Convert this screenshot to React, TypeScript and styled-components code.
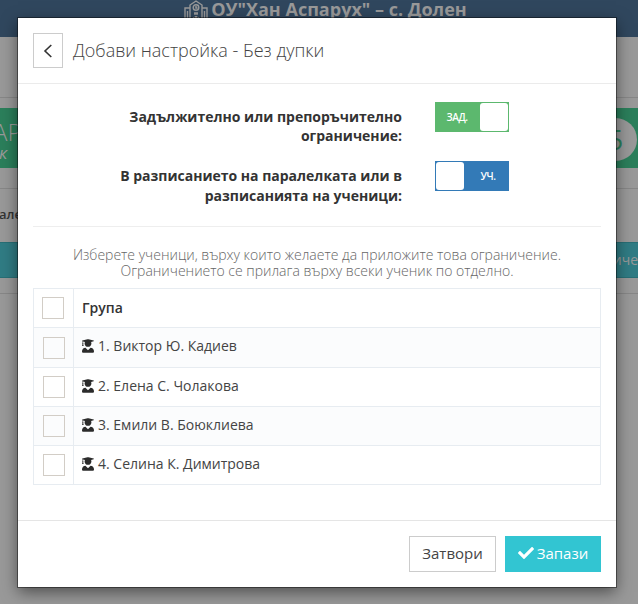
import React from "react";
import styled, { createGlobalStyle, css } from "styled-components";
import { FaCheck, FaUserGraduate } from "react-icons/fa";

const GlobalStyle = createGlobalStyle`
  * { box-sizing: border-box; }
  body {
    margin: 0;
    overflow: hidden;
    background: #999;
    color: #333;
    font: 14px/20px "Open Sans", sans-serif;
  }
  button { font-family: inherit; cursor: pointer; }
`;

const Page = styled.div`
  position: relative;
  height: 604px;
  overflow: hidden;
`;

const TopBar = styled.header`
  display: flex;
  justify-content: center;
  gap: 3px;
  height: 37px;
  padding-left: 13px;
  background: #30475e;
  color: #999;
  font-size: 18px;
  font-weight: 700;
  line-height: 19px;
  white-space: nowrap;
`;

const Backdrop = styled.main`
  display: flex;
  flex-direction: column;
`;

const Strip = styled.div<{ $height: number }>`
  height: ${(p) => p.$height}px;
  border-bottom: 1px solid #878787;
`;

const Banner = styled.div`
  display: flex;
  justify-content: space-between;
  height: 60px;
  margin-top: 10px;
  background: #2b7f5b;
  color: #999;
`;

const BannerText = styled.div`
  width: 40px;
  padding-top: 7px;
  font-size: 24px;
  font-weight: 300;
  line-height: 33px;
  text-indent: -7px;
  white-space: nowrap;

  em {
    display: block;
    margin-top: -5px;
    font-size: 17px;
    font-weight: 400;
    line-height: 20px;
    text-indent: -1px;
  }
`;

const Badge = styled.div`
  width: 43px;
  height: 43px;
  margin: 10px 1px 0 0;
  border-radius: 50%;
  background: #999;
  color: #2b7f5b;
  font-size: 27px;
  line-height: 43px;
  text-align: center;
`;

const Caption = styled.div`
  height: 53px;
  padding-top: 15px;
  font-size: 13px;
  font-weight: 600;
  text-indent: -1px;
`;

const TealBar = styled.div`
  height: 36px;
  border: solid #286f76;
  border-width: 1px 0;
  background: #307c84;
  color: #999;
  line-height: 34px;
  text-align: right;
`;

const Dialog = styled.section`
  position: absolute;
  top: 18px;
  left: 18px;
  display: flex;
  flex-direction: column;
  width: 598px;
  height: 569px;
  background: #fff;
  box-shadow: 0 0 0 1px rgba(0, 0, 0, 0.42), 0 5px 15px rgba(0, 0, 0, 0.5);
`;

const DialogHeader = styled.header`
  display: flex;
  gap: 10px;
  height: 66px;
  padding: 15px;
  border-bottom: 1px solid #ebebeb;
`;

const BackButton = styled.button`
  display: grid;
  place-items: center;
  width: 30px;
  height: 35px;
  padding: 0;
  border: 1px solid #ccc;
  background: #fff;
`;

const Title = styled.h4`
  margin: 0;
  color: #444;
  font-size: 18px;
  font-weight: 300;
  line-height: 35px;
`;

const DialogBody = styled.div`
  flex: 1;
  padding: 18px 15px 0;
`;

const Field = styled.div`
  display: flex;
  gap: 33px;
  height: 59px;
`;

const Label = styled.label<{ $leading: number }>`
  width: 369px;
  padding-top: 5px;
  font-weight: 700;
  line-height: ${(p) => p.$leading}px;
  text-align: right;
`;

const Switch = styled.button<{ $on: boolean }>`
  display: flex;
  flex-direction: ${(p) => (p.$on ? "row" : "row-reverse")};
  width: 74px;
  height: 30px;
  padding: 1px;
  border: 0;
  background: ${(p) => (p.$on ? "#5cb86e" : "#337ab7")};
  color: #fff;
  font-size: 10px;
  font-weight: 600;
  line-height: 28px;
`;

const SwitchText = styled.span<{ $on: boolean }>`
  flex: 1;
  padding: ${(p) => (p.$on ? "0 2px 0 0" : "0 0 0 4px")};
  text-align: center;
  letter-spacing: -0.4px;
`;

const Knob = styled.span`
  width: 28px;
  height: 28px;
  border-radius: 3px;
  background: #fff;
`;

const Divider = styled.hr`
  height: 1px;
  margin: 6px 0 20px;
  border: 0;
  background: #eee;
`;

const Hint = styled.p`
  margin: 0 0 9px;
  color: #666;
  font-weight: 300;
  line-height: 16px;
  text-align: center;
`;

const Table = styled.div`
  border: 1px solid #e7ecf1;
  border-bottom: 0;
`;

const Row = styled.div<{ $height?: number; $shaded?: boolean; $head?: boolean }>`
  display: flex;
  height: ${(p) => p.$height ?? 39}px;
  border-bottom: 1px solid #e7ecf1;
  background: ${(p) => (p.$shaded ? "#fbfcfd" : "#fff")};
  ${(p) => p.$head && css`font-weight: 600;`}
`;

const CheckCell = styled.div<{ $head?: boolean; $top: number }>`
  width: 40px;
  padding: ${(p) => p.$top}px 0 0 ${(p) => (p.$head ? 8 : 9)}px;
  border-right: 1px solid #e7ecf1;
`;

const Checkbox = styled.div`
  width: 22px;
  height: 22px;
  border: 1px solid #d2cdc6;
`;

const NameCell = styled.div<{ $head?: boolean }>`
  display: flex;
  gap: 4px;
  padding: ${(p) => (p.$head ? 9 : 8)}px 8px 0;
  color: ${(p) => (p.$head ? "#333" : "#444")};
`;

const StudentIcon = styled(FaUserGraduate)`
  width: 12px;
  height: 14px;
  margin-top: 3px;
  color: #2b2b2b;
`;

const DialogFooter = styled.footer`
  display: flex;
  justify-content: flex-end;
  gap: 9px;
  height: 67px;
  padding: 15px;
  border-top: 1px solid #e5e5e5;
`;

const Action = styled.button<{ $primary?: boolean }>`
  display: flex;
  align-items: center;
  justify-content: center;
  gap: 3px;
  width: ${(p) => (p.$primary ? 96 : 87)}px;
  height: 36px;
  padding: 0 0 2px;
  border: 1px solid ${(p) => (p.$primary ? "#32c5d2" : "#ccc")};
  background: ${(p) => (p.$primary ? "#32c5d2" : "#fff")};
  color: ${(p) => (p.$primary ? "#fff" : "#444")};
  font-size: 15px;
  font-weight: ${(p) => (p.$primary ? 500 : 400)};
`;

const students = ["Виктор Ю. Кадиев", "Елена С. Чолакова", "Емили В. Боюклиева", "Селина К. Димитрова"];

const SchoolIcon = () => (
  <svg width="24" height="22" viewBox="0 0 24 22" fill="none" stroke="currentColor" strokeWidth="1.4">
    <path d="M1 22V8h5M23 22V8h-5M6 22V5l6-4 6 4v17M3.5 11v11M20.5 11v11M9.5 22v-5M14.5 22v-5" />
    <circle cx="12" cy="7.5" r="2.8" />
    <path d="M12 6v2h1.5" />
    <path d="M10 13.5h4M12 16v6" strokeWidth="2.6" />
  </svg>
);

export default function App() {
  return (
    <Page>
      <GlobalStyle />
      <TopBar>
        <SchoolIcon />
        <span>ОУ"Хан Аспарух" – с. Долен</span>
      </TopBar>
      <Backdrop>
        <Strip $height={61} />
        <Banner>
          <BannerText>
            АР
            <em>к</em>
          </BannerText>
          <Badge>5</Badge>
        </Banner>
        <Strip $height={21} />
        <Caption>але</Caption>
        <TealBar>иче</TealBar>
        <Strip $height={16} />
      </Backdrop>
      <Dialog role="dialog">
        <DialogHeader>
          <BackButton aria-label="Назад">
            <svg width="10" height="14" viewBox="0 0 10 14" fill="none" stroke="#333" strokeWidth="1.6">
              <path d="M8.3 1 2 7l6.3 6" />
            </svg>
          </BackButton>
          <Title>Добави настройка - Без дупки</Title>
        </DialogHeader>
        <DialogBody>
          <Field>
            <Label $leading={19}>
              Задължително или препоръчително
              <br />
              ограничение:
            </Label>
            <Switch $on>
              <SwitchText $on>ЗАД.</SwitchText>
              <Knob />
            </Switch>
          </Field>
          <Field>
            <Label $leading={20}>
              В разписанието на паралелката или в
              <br />
              разписанията на ученици:
            </Label>
            <Switch $on={false}>
              <SwitchText $on={false}>УЧ.</SwitchText>
              <Knob />
            </Switch>
          </Field>
          <Divider />
          <Hint>
            Изберете ученици, върху които желаете да приложите това ограничение.
            <br />
            Ограничението се прилага върху всеки ученик по отделно.
          </Hint>
          <Table>
            <Row $head>
              <CheckCell $head $top={8}>
                <Checkbox />
              </CheckCell>
              <NameCell $head>Група</NameCell>
            </Row>
            {students.map((name, i) => (
              <Row key={name} $height={i === 0 ? 40 : 39} $shaded={i % 2 === 0}>
                <CheckCell $top={i === 0 ? 9 : 8}>
                  <Checkbox />
                </CheckCell>
                <NameCell>
                  <StudentIcon />
                  <span>
                    {i + 1}. {name}
                  </span>
                </NameCell>
              </Row>
            ))}
          </Table>
        </DialogBody>
        <DialogFooter>
          <Action>Затвори</Action>
          <Action $primary>
            <FaCheck size={16} />
            Запази
          </Action>
        </DialogFooter>
      </Dialog>
    </Page>
  );
}
